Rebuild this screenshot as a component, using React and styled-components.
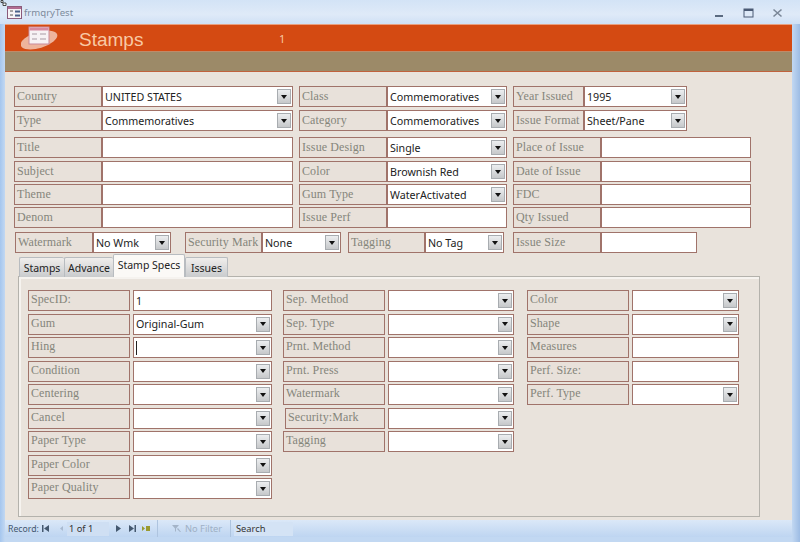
import React from 'react'
import styled, { createGlobalStyle } from 'styled-components'

const Global = createGlobalStyle`
  html, body { margin: 0; padding: 0; background: #a9c6ea; }
  * { box-sizing: border-box; }
`

const Page = styled.div`
  width: 800px;
  height: 542px;
  overflow: hidden;
  display: flex;
  flex-direction: column;
  background: linear-gradient(90deg, #a5c6ee 0, #c2d8f2 5px, #c2d8f2 792px, #9dbce4 800px);
  font-family: "Noto Sans", sans-serif;
`

const TitleBar = styled.div`
  height: 24px;
  flex: none;
  position: relative;
  display: flex;
  align-items: center;
  padding: 1px 17px 0 7px;
  background: linear-gradient(180deg, #d3e3f6 0, #dfeaf8 60%, #cfe0f5 100%);
`

const CornerMark = styled.svg`
  position: absolute;
  left: 0;
  top: 0;
`

const TitleText = styled.span`
  margin-left: 2px;
  font-size: 9.6px;
  color: #7c8a9c;
`

const WinButtons = styled.div`
  margin-left: auto;
  display: flex;
  align-items: center;
  gap: 18.5px;
`

const Frame = styled.div`
  flex: none;
  margin: 0 8px 0 5px;
  display: flex;
  flex-direction: column;
  background: #e9e3dc;
`

const Banner = styled.div`
  height: 27px;
  flex: none;
  display: flex;
  align-items: center;
  background: #d44a12;
  border-top: 1px solid #e8a080;
  padding-left: 16px;
  color: #f8c9a4;
`

const BannerTitle = styled.span`
  margin-left: 20px;
  width: 200px;
  padding-top: 4px;
  font-size: 19px;
  font-family: "Liberation Sans", sans-serif;
`

const BannerNumber = styled.span`
  font-size: 11px;
`

const Strip = styled.div`
  height: 21px;
  flex: none;
  background: #9c8a68;
  border-top: 1px solid #c08a68;
  border-bottom: 1px solid #c0623c;
`

const Top = styled.div`
  padding: 14px 0 0 9px;
  display: flex;
  flex-direction: column;
`

const Row = styled.div`
  display: flex;
  height: 21px;
  margin-top: ${p => p.$mt || 0}px;
  gap: 6px;
`

const Pair = styled.div`
  display: flex;
  width: ${p => p.$w}px;
  flex: none;
  margin-left: ${p => p.$ml || 0}px;
`

const Label = styled.div`
  width: ${p => p.$w}px;
  flex: none;
  display: flex;
  align-items: center;
  padding-left: 2px;
  padding-bottom: ${p => p.$pb}px;
  border: 1px solid #a0736a;
  background: #e8e1da;
  font-family: "Liberation Serif", serif;
  font-size: 12px;
  letter-spacing: 0.1px;
  color: #85857a;
  white-space: nowrap;
`

const Value = styled.div`
  flex: 1;
  min-width: 0;
  margin-left: ${p => p.$gap || 0}px;
  display: flex;
  align-items: center;
  justify-content: space-between;
  padding: 0 1px 0 2px;
  border: 1px solid #a0736a;
  background: #fff;
  font-size: 10.7px;
  color: #222;
  white-space: nowrap;
`

const Arrow = styled.span`
  width: 14px;
  height: 15px;
  flex: none;
  margin-left: auto;
  display: flex;
  align-items: center;
  justify-content: center;
  background: linear-gradient(180deg, #eceef0, #c6c8ca);
  border: 1px solid #a8acb0;
  &::after {
    content: "";
    border-left: 3.5px solid transparent;
    border-right: 3.5px solid transparent;
    border-top: 4px solid #111;
  }
`

const Caret = styled.span`
  width: 1px;
  height: 14px;
  background: #222;
`

const Tabs = styled.div`
  display: flex;
  align-items: flex-end;
  height: 23px;
  margin: 1px 0 0 5px;
  position: relative;
  z-index: 1;
`

const Tab = styled.div`
  width: ${p => p.$w}px;
  height: ${p => (p.$active ? 23 : 20)}px;
  display: flex;
  align-items: center;
  justify-content: center;
  padding-bottom: ${p => (p.$active ? 3 : 0)}px;
  font-size: 10.5px;
  color: #222;
  border: 1px solid #b8bcc0;
  border-right: ${p => (p.$active ? 1 : 0)}px solid #b8bcc0;
  border-bottom: 0;
  border-radius: 2px 2px 0 0;
  background: ${p => (p.$active ? '#fbf9f6' : 'linear-gradient(180deg, #f0eeec, #c9cbcd)')};
  &:last-child { border-right: 1px solid #b8bcc0; }
`

const Panel = styled.div`
  width: 742px;
  height: 241px;
  margin: -1px 0 0 4px;
  padding: 13px 0 0 9px;
  border: 1px solid #b4b2ac;
  box-shadow: inset 2px 2px 0 #f6f3ef;
  display: flex;
  gap: 11px;
`

const Column = styled.div`
  width: ${p => p.$w}px;
  flex: none;
  margin-left: ${p => p.$ml || 0}px;
  display: flex;
  flex-direction: column;
  gap: 2.5px;
`

const SpecRow = styled.div`
  display: flex;
  height: 21px;
  flex: none;
  padding-left: ${p => p.$indent || 0}px;
`

const NavBar = styled.div`
  height: 17px;
  flex: none;
  margin-top: 3px;
  display: flex;
  align-items: center;
  background: linear-gradient(180deg, #dbe8f8, #bed5f1);
  font-size: 9.3px;
  color: #43566e;
`

const NavLabel = styled.span`
  margin-left: 3px;
  width: 33px;
  font-size: 8.7px;
`

const NavCount = styled.span`
  width: 42px;
  height: 14px;
  margin: 0 5px 0 2px;
  padding-left: 2px;
  background: #cfdff3;
  color: #333;
  line-height: 14px;
`

const NavGroup = styled.div`
  display: flex;
  align-items: center;
  gap: ${p => p.$gap || 0}px;
`

const NoFilter = styled.span`
  width: 74px;
  height: 17px;
  margin-left: 6px;
  padding-left: 14px;
  display: flex;
  align-items: center;
  gap: 4px;
  color: #9fb0c4;
  border-left: 1px solid #aec4df;
  border-right: 1px solid #aec4df;
`

const Search = styled.span`
  width: 59px;
  height: 14px;
  margin-left: 3px;
  padding-left: 2px;
  line-height: 14px;
  background: #d4e3f5;
  color: #333;
`

const FormIcon = ({ size = 15 }) => (
  <svg width={size} height={size * 0.87} viewBox="0 0 15 13">
    <rect x="0.5" y="0.5" width="14" height="12" fill="#f6f3f6" stroke="#8a5a7a" />
    <rect x="1" y="1" width="13" height="2" fill="#b06a90" />
    <path d="M3 5h3M3 9h3" stroke="#555" />
    <rect x="8" y="4.5" width="5" height="2" fill="#49608a" />
    <rect x="8" y="8.5" width="5" height="2" fill="#49608a" />
  </svg>
)

const BannerLogo = () => (
  <svg width="38" height="26" viewBox="0 0 38 26">
    <ellipse cx="18" cy="15" rx="19" ry="8" transform="rotate(-17 18 15)" fill="#eeb49c" />
    <rect x="8" y="2" width="20" height="17" fill="#f7f2f4" stroke="#c98a9a" />
    <rect x="8.5" y="2.5" width="19" height="3" fill="#d88aa0" />
    <path d="M11 9h5M11 14h5M19 9h6M19 14h6" stroke="#a89aa4" />
  </svg>
)

const NavIcon = ({ d, fill = '#44586f' }) => (
  <svg width="9" height="9" viewBox="0 0 9 9"><path d={d} fill={fill} /></svg>
)

const Field = ({ label, w, lw, value, combo, caret, gap, ml, pb = 1 }) => (
  <Pair $w={w} $ml={ml}>
    <Label $w={lw} $pb={pb}>{label}</Label>
    <Value $gap={gap}>
      {caret ? <Caret /> : <span>{value}</span>}
      {combo && <Arrow />}
    </Value>
  </Pair>
)

const Spec = ({ label, w, lw, value, combo, caret, indent }) => (
  <SpecRow $indent={indent}>
    <Field label={label} w={w - (indent || 0)} lw={lw - (indent || 0)} value={value} combo={combo} caret={caret} gap={3} pb={2} />
  </SpecRow>
)

const col1 = [
  ['SpecID:', '1', false],
  ['Gum', 'Original-Gum', true],
  ['Hing', '', true, true],
  ['Condition', '', true],
  ['Centering', '', true],
  ['Cancel', '', true],
  ['Paper Type', '', true],
  ['Paper Color', '', true],
  ['Paper Quality', '', true],
]

const col2 = [
  ['Sep. Method'], ['Sep. Type'], ['Prnt. Method'], ['Prnt. Press'], ['Watermark'],
  ['Security:Mark', 2], ['Tagging'],
]

const col3 = [
  ['Color', true], ['Shape', true], ['Measures', false], ['Perf. Size:', false], ['Perf. Type', true],
]

export default function App() {
  return (
    <Page>
      <Global />
      <TitleBar>
        <CornerMark width="7" height="6" viewBox="0 0 7 6">
          <path d="M1 0.5h2v2H1zM3 3h3v2.5H3z" fill="#fff" stroke="#222" strokeWidth="0.8" />
        </CornerMark>
        <FormIcon />
        <TitleText>frmqryTest</TitleText>
        <WinButtons>
          <svg width="10" height="10" viewBox="0 0 10 10"><rect x="1" y="7" width="8" height="2" fill="#5a6a80" /></svg>
          <svg width="11" height="10" viewBox="0 0 11 10"><rect x="1" y="1" width="9" height="8" fill="none" stroke="#4a5a74" /><rect x="1" y="1" width="9" height="2" fill="#4a5a74" /></svg>
          <svg width="11" height="10" viewBox="0 0 11 10"><path d="M1.5 1.5l8 7M9.5 1.5l-8 7" stroke="#7a8798" strokeWidth="1.6" /></svg>
        </WinButtons>
      </TitleBar>
      <Frame>
        <Banner>
          <BannerLogo />
          <BannerTitle>Stamps</BannerTitle>
          <BannerNumber>1</BannerNumber>
        </Banner>
        <Strip />
        <Top>
          <Row>
            <Field w={279} lw={88} label="Country" value="UNITED STATES" combo />
            <Field w={208} lw={88} label="Class" value="Commemoratives" combo />
            <Field w={174} lw={71} label="Year Issued" value="1995" combo />
          </Row>
          <Row $mt={3}>
            <Field w={279} lw={88} label="Type" value="Commemoratives" combo />
            <Field w={208} lw={88} label="Category" value="Commemoratives" combo />
            <Field w={174} lw={71} label="Issue Format" value="Sheet/Pane" combo />
          </Row>
          <Row $mt={6}>
            <Field w={279} lw={88} label="Title" />
            <Field w={208} lw={88} label="Issue Design" value="Single" combo />
            <Field w={238} lw={88} label="Place of Issue" />
          </Row>
          <Row $mt={3}>
            <Field w={279} lw={88} label="Subject" />
            <Field w={208} lw={88} label="Color" value="Brownish Red" combo />
            <Field w={238} lw={88} label="Date of Issue" />
          </Row>
          <Row $mt={2}>
            <Field w={279} lw={88} label="Theme" />
            <Field w={208} lw={88} label="Gum Type" value="WaterActivated" combo />
            <Field w={238} lw={88} label="FDC" />
          </Row>
          <Row $mt={2}>
            <Field w={279} lw={88} label="Denom" />
            <Field w={208} lw={88} label="Issue Perf" />
            <Field w={238} lw={88} label="Qty Issued" />
          </Row>
          <Row $mt={4}>
            <Field ml={1} w={156} lw={78} label="Watermark" value="No Wmk" combo />
            <Field ml={8} w={156} lw={77} label="Security Mark" value="None" combo />
            <Field ml={1} w={156} lw={77} label="Tagging" value="No Tag" combo />
            <Field ml={3} w={184} lw={88} label="Issue Size" />
          </Row>
          <Tabs>
            <Tab $w={45}>Stamps</Tab>
            <Tab $w={49}>Advance</Tab>
            <Tab $w={72} $active>Stamp Specs</Tab>
            <Tab $w={43}>Issues</Tab>
          </Tabs>
          <Panel>
            <Column $w={244}>
              {col1.map(([label, value, combo, caret]) => (
                <Spec key={label} w={244} lw={102} label={label} value={value} combo={combo} caret={caret} />
              ))}
            </Column>
            <Column $w={231}>
              {col2.map(([label, indent]) => (
                <Spec key={label} w={231} lw={102} label={label} combo indent={indent} />
              ))}
            </Column>
            <Column $w={212} $ml={2}>
              {col3.map(([label, combo]) => (
                <Spec key={label} w={212} lw={102} label={label} combo={combo} />
              ))}
            </Column>
          </Panel>
        </Top>
        <NavBar>
          <NavLabel>Record:</NavLabel>
          <NavGroup $gap={6}>
            <NavIcon d="M1 1h1.5v7H1zM8 1v7L3 4.5z" />
            <NavIcon d="M7 2v5L4 4.5z" fill="#a9bad0" />
          </NavGroup>
          <NavCount>1 of 1</NavCount>
          <NavGroup $gap={5}>
            <NavIcon d="M2 1v7l5-3.5z" />
            <NavIcon d="M1 1v7l5-3.5zM6.5 1H8v7H6.5z" />
            <NavIcon d="M0 2v5l3-2.5z M4 2h4v5H4z" fill="#9a9a30" />
          </NavGroup>
          <NoFilter>
            <NavIcon d="M0 1h7L4 4.5V8L3 7V4.5zM6 4l3 4H8L5 5z" fill="#a4b4c8" />
            No Filter
          </NoFilter>
          <Search>Search</Search>
        </NavBar>
      </Frame>
    </Page>
  )
}
